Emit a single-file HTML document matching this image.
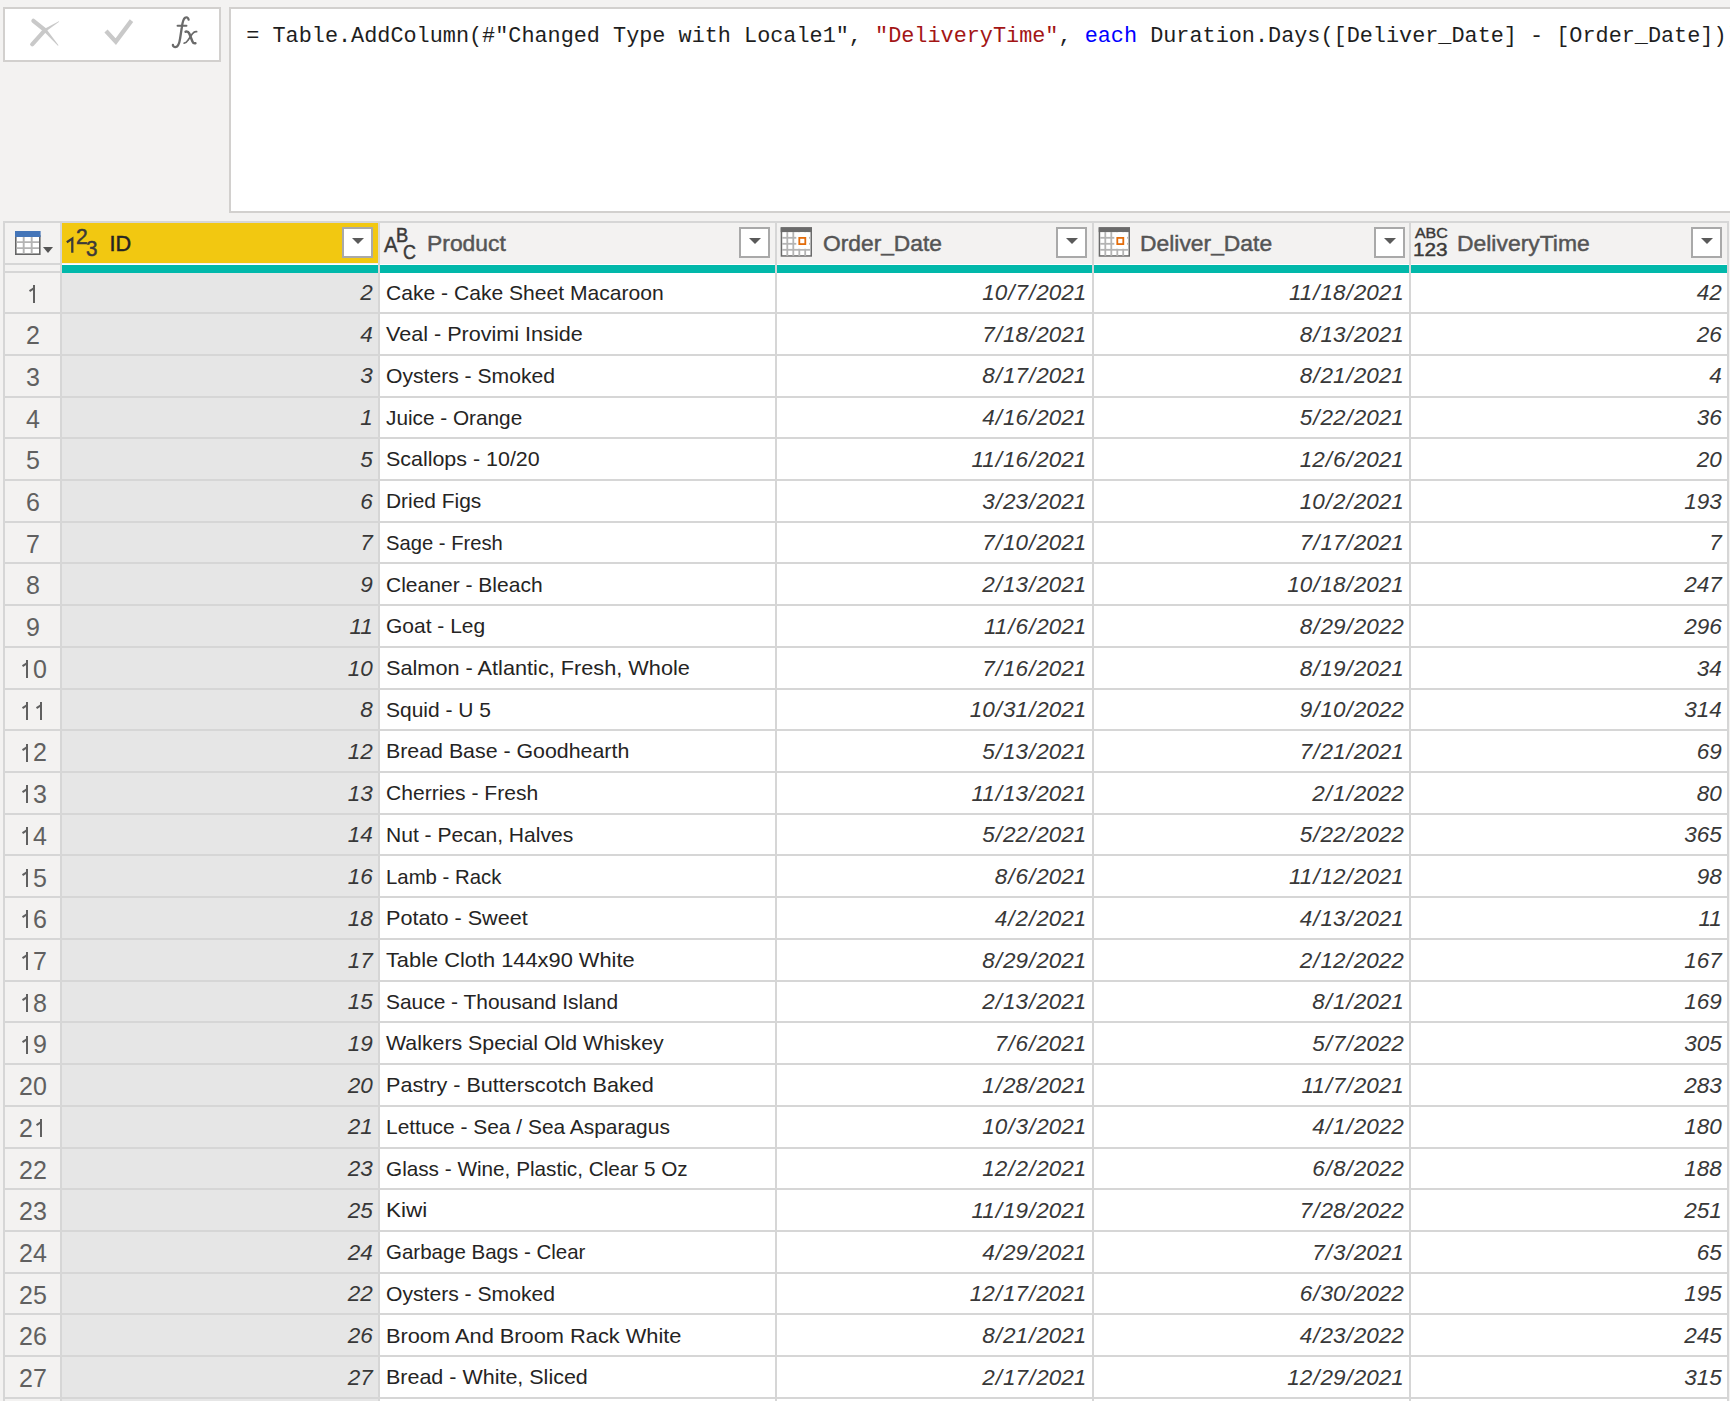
<!DOCTYPE html><html><head><meta charset="utf-8"><style>
*{margin:0;padding:0;box-sizing:border-box}
html,body{width:1730px;height:1402px;overflow:hidden;background:#f3f2f1;font-family:"Liberation Sans",sans-serif;color:#252423}
.a{position:absolute}
.t{position:absolute;white-space:pre;line-height:1}
.fb{position:absolute;background:#fff;border:2px solid #d2d0ce}
.mono{font-family:"Liberation Mono",monospace;font-size:21.83px;color:#1e1e1e}
.hl{position:absolute;height:2px;background:#d6d6d6}
.vl{position:absolute;width:2px;background:#d6d6d6}
.dd{position:absolute;width:31px;height:31px;background:#fff;border:2px solid #a9a9a9}
.dd:after{content:"";position:absolute;left:7.5px;top:9px;border-left:6px solid transparent;border-right:6px solid transparent;border-top:6px solid #5a5a5a}
.hd{position:absolute;font-size:21.7px;font-weight:normal;-webkit-text-stroke:0.45px currentColor;color:#555;line-height:1;white-space:pre;transform-origin:0 0}
.num{font-style:italic;font-size:22.5px;text-align:right;color:#383838}
.num i{font-style:italic;padding:0 1px}
.rn{font-size:25px;color:#606060;text-align:center}
.one{display:inline-block;position:relative;width:0.556em;height:1em;vertical-align:top;color:transparent}
.one::before{content:"";position:absolute;left:0.27em;top:0.13em;width:0.08em;height:0.716em;background:#606060}
.one::after{content:"";position:absolute;left:0.09em;top:0.22em;width:0.24em;height:0.08em;background:#606060;transform:rotate(-33deg);transform-origin:100% 0}
</style></head><body>
<div class="fb" style="left:3px;top:7px;width:218px;height:55px"></div>
<svg class="a" style="left:0;top:0" width="230" height="60"><g stroke="#c9c9c9" stroke-width="4.2" stroke-linecap="round"><line x1="33.4" y1="20.8" x2="45" y2="30.2"/><line x1="32.2" y1="44.3" x2="45" y2="30.2"/></g><g fill="#c9c9c9"><polygon points="43.68,31.34 57.9,45.76 58.5,45.24 46.32,29.06"/><polygon points="44.2,28.93 58.84,21.15 59.16,21.65 45.8,31.47"/></g><polyline points="106,31 115.8,41.6 131.5,20.6" fill="none" stroke="#c9c9c9" stroke-width="4.3"/></svg>
<svg class="a" style="left:0;top:0" width="220" height="60"><g fill="none" stroke="#6a6a6a" stroke-linecap="round"><path d="M188.6 19.6C188.3 17.4 186.4 16.9 185.1 17.7C183.3 18.9 182.3 23.5 181.8 27.5L180.1 38.5C179.3 44 177.4 47.3 175 47.1C173.6 47 172.8 46 172.9 44.8" stroke-width="2.3"/><path d="M177.6 25.8H186.4" stroke-width="2.1"/><path d="M185.6 31.7C187.6 31.3 188.6 32.1 189.3 33.6L192.5 41.6C193 42.9 194 43.5 195.4 43.3" stroke-width="2.5"/><path d="M196.6 31.7C195.2 31.4 193.8 32.1 192.4 33.7L187.8 40.4C186.9 41.9 185.7 43.2 184.2 43.2" stroke-width="1.7"/></g></svg>
<div class="fb" style="left:229px;top:7px;width:1520px;height:206px"></div>
<div class="t mono" style="left:246.3px;top:26px">= Table.AddColumn(#"Changed Type with Locale1", <span style="color:#a31515">"DeliveryTime"</span>, <span style="color:#0000ff">each</span> Duration.Days([Deliver_Date] - [Order_Date]))</div>
<div class="a" style="left:3px;top:221px;width:1725px;height:1190px;background:#fff"></div>
<div class="a" style="left:3px;top:221px;width:1725px;height:43px;background:#f3f2f1"></div>
<div class="a" style="left:3px;top:221px;width:59px;height:1190px;background:#f3f2f1"></div>
<div class="a" style="left:61.2px;top:273px;width:317.7px;height:1190px;background:#e6e6e6"></div>
<div class="a" style="left:62px;top:223px;width:316.9px;height:40px;background:#f2c811"></div>
<div class="a" style="left:62px;top:264.5px;width:1665.8px;height:8.5px;background:#01b8aa"></div>
<div class="hl" style="left:3px;top:221px;width:1725.4px"></div>
<div class="hl" style="left:3px;top:262.5px;width:59px"></div>
<div class="hl" style="left:3px;top:270.7px;width:59px"></div>
<div class="hl" style="left:3px;top:312.10px;width:1725.4px"></div>
<div class="hl" style="left:3px;top:353.82px;width:1725.4px"></div>
<div class="hl" style="left:3px;top:395.54px;width:1725.4px"></div>
<div class="hl" style="left:3px;top:437.26px;width:1725.4px"></div>
<div class="hl" style="left:3px;top:478.98px;width:1725.4px"></div>
<div class="hl" style="left:3px;top:520.70px;width:1725.4px"></div>
<div class="hl" style="left:3px;top:562.42px;width:1725.4px"></div>
<div class="hl" style="left:3px;top:604.14px;width:1725.4px"></div>
<div class="hl" style="left:3px;top:645.86px;width:1725.4px"></div>
<div class="hl" style="left:3px;top:687.58px;width:1725.4px"></div>
<div class="hl" style="left:3px;top:729.30px;width:1725.4px"></div>
<div class="hl" style="left:3px;top:771.02px;width:1725.4px"></div>
<div class="hl" style="left:3px;top:812.74px;width:1725.4px"></div>
<div class="hl" style="left:3px;top:854.46px;width:1725.4px"></div>
<div class="hl" style="left:3px;top:896.18px;width:1725.4px"></div>
<div class="hl" style="left:3px;top:937.90px;width:1725.4px"></div>
<div class="hl" style="left:3px;top:979.62px;width:1725.4px"></div>
<div class="hl" style="left:3px;top:1021.34px;width:1725.4px"></div>
<div class="hl" style="left:3px;top:1063.06px;width:1725.4px"></div>
<div class="hl" style="left:3px;top:1104.78px;width:1725.4px"></div>
<div class="hl" style="left:3px;top:1146.50px;width:1725.4px"></div>
<div class="hl" style="left:3px;top:1188.22px;width:1725.4px"></div>
<div class="hl" style="left:3px;top:1229.94px;width:1725.4px"></div>
<div class="hl" style="left:3px;top:1271.66px;width:1725.4px"></div>
<div class="hl" style="left:3px;top:1313.38px;width:1725.4px"></div>
<div class="hl" style="left:3px;top:1355.10px;width:1725.4px"></div>
<div class="hl" style="left:3px;top:1396.82px;width:1725.4px"></div>
<div class="vl" style="left:2.8px;top:221px;height:1190px"></div>
<div class="vl" style="left:60.20px;top:221px;height:1190px"></div>
<div class="vl" style="left:377.90px;top:221px;height:1190px"></div>
<div class="vl" style="left:774.50px;top:221px;height:1190px"></div>
<div class="vl" style="left:1091.90px;top:221px;height:1190px"></div>
<div class="vl" style="left:1409.40px;top:221px;height:1190px"></div>
<div class="vl" style="left:1726.80px;top:221px;height:1190px"></div>
<svg class="a" style="left:14px;top:230px" width="42" height="28"><rect x="1.8" y="6" width="24" height="18.2" fill="#fff" stroke="#666" stroke-width="1.6"/><path d="M9.7 7v16.4M17.7 7v16.4M2.6 12.1h22.4M2.6 18.1h22.4" stroke="#b4b4b4" stroke-width="1.9"/><rect x="1" y="1" width="25.6" height="6" fill="#4475b8"/><path d="M29 17h10l-5 6z" fill="#555"/></svg>
<svg class="a" style="left:0;top:0" width="100" height="260"><path d="M66.8 242.2L72.3 238.6V252.8" fill="none" stroke="#3b3a39" stroke-width="2.3"/></svg>
<div class="t" style="left:75.55px;top:226.00px;font-size:22.00px;font-weight:normal;color:#3b3a39;-webkit-text-stroke:0.5px #3b3a39;transform:scaleX(0.958);transform-origin:0 0">2</div>
<div class="t" style="left:86.27px;top:238.15px;font-size:21.69px;font-weight:normal;color:#3b3a39;-webkit-text-stroke:0.5px #3b3a39;transform:scaleX(0.952);transform-origin:0 0">3</div>
<div class="hd" style="left:109.5px;top:232.8px;color:#252423">ID</div>
<div class="dd" style="left:342.3px;top:227.3px"></div>
<div class="t" style="left:384.00px;top:233.83px;font-size:22.32px;font-weight:normal;color:#3b3a39;-webkit-text-stroke:0.5px #3b3a39;transform:scaleX(0.910);transform-origin:0 0">A</div>
<div class="t" style="left:396.34px;top:224.71px;font-size:20.58px;font-weight:normal;color:#3b3a39;-webkit-text-stroke:0.5px #3b3a39;transform:scaleX(0.889);transform-origin:0 0">B</div>
<div class="t" style="left:403.40px;top:240.63px;font-size:21.13px;font-weight:normal;color:#3b3a39;-webkit-text-stroke:0.5px #3b3a39;transform:scaleX(0.849);transform-origin:0 0">C</div>
<div class="hd" style="left:426.7px;top:232.8px;transform:scaleX(1.055)">Product</div>
<div class="dd" style="left:739.3px;top:227.3px"></div>
<svg class="a" style="left:780px;top:227px" width="34" height="31"><rect x="1.45" y="1.05" width="29.8" height="27.9" fill="#fff" stroke="#6b6b6b" stroke-width="1.5"/><rect x="0.7" y="0.3" width="31.3" height="4.8" fill="#6b6b6b"/><line x1="7.3" y1="5" x2="7.3" y2="28.9" stroke="#b4b4b4" stroke-width="1.8"/><line x1="13.3" y1="5" x2="13.3" y2="28.9" stroke="#b4b4b4" stroke-width="1.8"/><line x1="19.3" y1="5" x2="19.3" y2="28.9" stroke="#b4b4b4" stroke-width="1.8"/><line x1="25.2" y1="5" x2="25.2" y2="28.9" stroke="#b4b4b4" stroke-width="1.8"/><line x1="2.2" y1="10.8" x2="30.5" y2="10.8" stroke="#b4b4b4" stroke-width="1.8"/><line x1="2.2" y1="16.8" x2="30.5" y2="16.8" stroke="#b4b4b4" stroke-width="1.8"/><line x1="2.2" y1="22.8" x2="30.5" y2="22.8" stroke="#b4b4b4" stroke-width="1.8"/><rect x="16.3" y="5.2" width="12.8" height="16.6" rx="3" fill="#fff"/><rect x="19.3" y="10.9" width="6" height="6.2" fill="#fff" stroke="#e36c0a" stroke-width="1.8"/></svg>
<div class="hd" style="left:823px;top:232.8px;transform:scaleX(1.05)">Order_Date</div>
<div class="dd" style="left:1056.3px;top:227.3px"></div>
<svg class="a" style="left:1097.5px;top:227px" width="34" height="31"><rect x="1.45" y="1.05" width="29.8" height="27.9" fill="#fff" stroke="#6b6b6b" stroke-width="1.5"/><rect x="0.7" y="0.3" width="31.3" height="4.8" fill="#6b6b6b"/><line x1="7.3" y1="5" x2="7.3" y2="28.9" stroke="#b4b4b4" stroke-width="1.8"/><line x1="13.3" y1="5" x2="13.3" y2="28.9" stroke="#b4b4b4" stroke-width="1.8"/><line x1="19.3" y1="5" x2="19.3" y2="28.9" stroke="#b4b4b4" stroke-width="1.8"/><line x1="25.2" y1="5" x2="25.2" y2="28.9" stroke="#b4b4b4" stroke-width="1.8"/><line x1="2.2" y1="10.8" x2="30.5" y2="10.8" stroke="#b4b4b4" stroke-width="1.8"/><line x1="2.2" y1="16.8" x2="30.5" y2="16.8" stroke="#b4b4b4" stroke-width="1.8"/><line x1="2.2" y1="22.8" x2="30.5" y2="22.8" stroke="#b4b4b4" stroke-width="1.8"/><rect x="16.3" y="5.2" width="12.8" height="16.6" rx="3" fill="#fff"/><rect x="19.3" y="10.9" width="6" height="6.2" fill="#fff" stroke="#e36c0a" stroke-width="1.8"/></svg>
<div class="hd" style="left:1140px;top:232.8px;transform:scaleX(1.054)">Deliver_Date</div>
<div class="dd" style="left:1374.3px;top:227.3px"></div>
<div class="t" style="left:1415.00px;top:225.18px;font-size:15.49px;font-weight:normal;color:#3b3a39;-webkit-text-stroke:0.45px #3b3a39;transform:scaleX(1.028);transform-origin:0 0">ABC</div>
<div class="t" style="left:1413.34px;top:240.35px;font-size:19.01px;font-weight:normal;color:#3b3a39;-webkit-text-stroke:0.45px #3b3a39;transform:scaleX(1.093);transform-origin:0 0">123</div>
<div class="hd" style="left:1457.3px;top:232.8px;transform:scaleX(1.056)">DeliveryTime</div>
<div class="dd" style="left:1691.3px;top:227.3px"></div>
<div class="t rn" style="left:5px;width:56px;top:281.44px"><b class="one">1</b></div>
<div class="t num" style="left:61.2px;width:311.7px;top:282.05px">2</div>
<div class="t" style="left:386px;top:281.52px;font-size:21px;transform:scaleX(1.004);transform-origin:1px 0">Cake - Cake Sheet Macaroon</div>
<div class="t num" style="left:775.5px;width:310.9000000000001px;top:282.05px">10<i>/</i>7<i>/</i>2021</div>
<div class="t num" style="left:1092.9px;width:311.0px;top:282.05px">11<i>/</i>18<i>/</i>2021</div>
<div class="t num" style="left:1410.4px;width:311.39999999999986px;top:282.05px">42</div>
<div class="t rn" style="left:5px;width:56px;top:323.16px">2</div>
<div class="t num" style="left:61.2px;width:311.7px;top:323.77px">4</div>
<div class="t" style="left:386px;top:323.24px;font-size:21px;transform:scaleX(1.0277);transform-origin:1px 0">Veal - Provimi Inside</div>
<div class="t num" style="left:775.5px;width:310.9000000000001px;top:323.77px">7<i>/</i>18<i>/</i>2021</div>
<div class="t num" style="left:1092.9px;width:311.0px;top:323.77px">8<i>/</i>13<i>/</i>2021</div>
<div class="t num" style="left:1410.4px;width:311.39999999999986px;top:323.77px">26</div>
<div class="t rn" style="left:5px;width:56px;top:364.88px">3</div>
<div class="t num" style="left:61.2px;width:311.7px;top:365.49px">3</div>
<div class="t" style="left:386px;top:364.96px;font-size:21px;transform:scaleX(1.0054);transform-origin:1px 0">Oysters - Smoked</div>
<div class="t num" style="left:775.5px;width:310.9000000000001px;top:365.49px">8<i>/</i>17<i>/</i>2021</div>
<div class="t num" style="left:1092.9px;width:311.0px;top:365.49px">8<i>/</i>21<i>/</i>2021</div>
<div class="t num" style="left:1410.4px;width:311.39999999999986px;top:365.49px">4</div>
<div class="t rn" style="left:5px;width:56px;top:406.60px">4</div>
<div class="t num" style="left:61.2px;width:311.7px;top:407.21px">1</div>
<div class="t" style="left:386px;top:406.68px;font-size:21px;transform:scaleX(0.989);transform-origin:1px 0">Juice - Orange</div>
<div class="t num" style="left:775.5px;width:310.9000000000001px;top:407.21px">4<i>/</i>16<i>/</i>2021</div>
<div class="t num" style="left:1092.9px;width:311.0px;top:407.21px">5<i>/</i>22<i>/</i>2021</div>
<div class="t num" style="left:1410.4px;width:311.39999999999986px;top:407.21px">36</div>
<div class="t rn" style="left:5px;width:56px;top:448.32px">5</div>
<div class="t num" style="left:61.2px;width:311.7px;top:448.93px">5</div>
<div class="t" style="left:386px;top:448.40px;font-size:21px;transform:scaleX(1.0208);transform-origin:1px 0">Scallops - 10/20</div>
<div class="t num" style="left:775.5px;width:310.9000000000001px;top:448.93px">11<i>/</i>16<i>/</i>2021</div>
<div class="t num" style="left:1092.9px;width:311.0px;top:448.93px">12<i>/</i>6<i>/</i>2021</div>
<div class="t num" style="left:1410.4px;width:311.39999999999986px;top:448.93px">20</div>
<div class="t rn" style="left:5px;width:56px;top:490.04px">6</div>
<div class="t num" style="left:61.2px;width:311.7px;top:490.65px">6</div>
<div class="t" style="left:386px;top:490.12px;font-size:21px;transform:scaleX(0.9957);transform-origin:1px 0">Dried Figs</div>
<div class="t num" style="left:775.5px;width:310.9000000000001px;top:490.65px">3<i>/</i>23<i>/</i>2021</div>
<div class="t num" style="left:1092.9px;width:311.0px;top:490.65px">10<i>/</i>2<i>/</i>2021</div>
<div class="t num" style="left:1410.4px;width:311.39999999999986px;top:490.65px">193</div>
<div class="t rn" style="left:5px;width:56px;top:531.76px">7</div>
<div class="t num" style="left:61.2px;width:311.7px;top:532.37px">7</div>
<div class="t" style="left:386px;top:531.84px;font-size:21px;transform:scaleX(0.9613);transform-origin:1px 0">Sage - Fresh</div>
<div class="t num" style="left:775.5px;width:310.9000000000001px;top:532.37px">7<i>/</i>10<i>/</i>2021</div>
<div class="t num" style="left:1092.9px;width:311.0px;top:532.37px">7<i>/</i>17<i>/</i>2021</div>
<div class="t num" style="left:1410.4px;width:311.39999999999986px;top:532.37px">7</div>
<div class="t rn" style="left:5px;width:56px;top:573.48px">8</div>
<div class="t num" style="left:61.2px;width:311.7px;top:574.09px">9</div>
<div class="t" style="left:386px;top:573.56px;font-size:21px;transform:scaleX(1.0013);transform-origin:1px 0">Cleaner - Bleach</div>
<div class="t num" style="left:775.5px;width:310.9000000000001px;top:574.09px">2<i>/</i>13<i>/</i>2021</div>
<div class="t num" style="left:1092.9px;width:311.0px;top:574.09px">10<i>/</i>18<i>/</i>2021</div>
<div class="t num" style="left:1410.4px;width:311.39999999999986px;top:574.09px">247</div>
<div class="t rn" style="left:5px;width:56px;top:615.20px">9</div>
<div class="t num" style="left:61.2px;width:311.7px;top:615.81px">11</div>
<div class="t" style="left:386px;top:615.28px;font-size:21px;transform:scaleX(1.0);transform-origin:1px 0">Goat - Leg</div>
<div class="t num" style="left:775.5px;width:310.9000000000001px;top:615.81px">11<i>/</i>6<i>/</i>2021</div>
<div class="t num" style="left:1092.9px;width:311.0px;top:615.81px">8<i>/</i>29<i>/</i>2022</div>
<div class="t num" style="left:1410.4px;width:311.39999999999986px;top:615.81px">296</div>
<div class="t rn" style="left:5px;width:56px;top:656.92px"><b class="one">1</b>0</div>
<div class="t num" style="left:61.2px;width:311.7px;top:657.53px">10</div>
<div class="t" style="left:386px;top:657.00px;font-size:21px;transform:scaleX(1.0332);transform-origin:1px 0">Salmon - Atlantic, Fresh, Whole</div>
<div class="t num" style="left:775.5px;width:310.9000000000001px;top:657.53px">7<i>/</i>16<i>/</i>2021</div>
<div class="t num" style="left:1092.9px;width:311.0px;top:657.53px">8<i>/</i>19<i>/</i>2021</div>
<div class="t num" style="left:1410.4px;width:311.39999999999986px;top:657.53px">34</div>
<div class="t rn" style="left:5px;width:56px;top:698.64px"><b class="one">1</b><b class="one">1</b></div>
<div class="t num" style="left:61.2px;width:311.7px;top:699.25px">8</div>
<div class="t" style="left:386px;top:698.72px;font-size:21px;transform:scaleX(0.9981);transform-origin:1px 0">Squid - U 5</div>
<div class="t num" style="left:775.5px;width:310.9000000000001px;top:699.25px">10<i>/</i>31<i>/</i>2021</div>
<div class="t num" style="left:1092.9px;width:311.0px;top:699.25px">9<i>/</i>10<i>/</i>2022</div>
<div class="t num" style="left:1410.4px;width:311.39999999999986px;top:699.25px">314</div>
<div class="t rn" style="left:5px;width:56px;top:740.36px"><b class="one">1</b>2</div>
<div class="t num" style="left:61.2px;width:311.7px;top:740.97px">12</div>
<div class="t" style="left:386px;top:740.44px;font-size:21px;transform:scaleX(1.0165);transform-origin:1px 0">Bread Base - Goodhearth</div>
<div class="t num" style="left:775.5px;width:310.9000000000001px;top:740.97px">5<i>/</i>13<i>/</i>2021</div>
<div class="t num" style="left:1092.9px;width:311.0px;top:740.97px">7<i>/</i>21<i>/</i>2021</div>
<div class="t num" style="left:1410.4px;width:311.39999999999986px;top:740.97px">69</div>
<div class="t rn" style="left:5px;width:56px;top:782.08px"><b class="one">1</b>3</div>
<div class="t num" style="left:61.2px;width:311.7px;top:782.69px">13</div>
<div class="t" style="left:386px;top:782.16px;font-size:21px;transform:scaleX(1.0034);transform-origin:1px 0">Cherries - Fresh</div>
<div class="t num" style="left:775.5px;width:310.9000000000001px;top:782.69px">11<i>/</i>13<i>/</i>2021</div>
<div class="t num" style="left:1092.9px;width:311.0px;top:782.69px">2<i>/</i>1<i>/</i>2022</div>
<div class="t num" style="left:1410.4px;width:311.39999999999986px;top:782.69px">80</div>
<div class="t rn" style="left:5px;width:56px;top:823.80px"><b class="one">1</b>4</div>
<div class="t num" style="left:61.2px;width:311.7px;top:824.41px">14</div>
<div class="t" style="left:386px;top:823.88px;font-size:21px;transform:scaleX(1.0022);transform-origin:1px 0">Nut - Pecan, Halves</div>
<div class="t num" style="left:775.5px;width:310.9000000000001px;top:824.41px">5<i>/</i>22<i>/</i>2021</div>
<div class="t num" style="left:1092.9px;width:311.0px;top:824.41px">5<i>/</i>22<i>/</i>2022</div>
<div class="t num" style="left:1410.4px;width:311.39999999999986px;top:824.41px">365</div>
<div class="t rn" style="left:5px;width:56px;top:865.52px"><b class="one">1</b>5</div>
<div class="t num" style="left:61.2px;width:311.7px;top:866.13px">16</div>
<div class="t" style="left:386px;top:865.60px;font-size:21px;transform:scaleX(0.9692);transform-origin:1px 0">Lamb - Rack</div>
<div class="t num" style="left:775.5px;width:310.9000000000001px;top:866.13px">8<i>/</i>6<i>/</i>2021</div>
<div class="t num" style="left:1092.9px;width:311.0px;top:866.13px">11<i>/</i>12<i>/</i>2021</div>
<div class="t num" style="left:1410.4px;width:311.39999999999986px;top:866.13px">98</div>
<div class="t rn" style="left:5px;width:56px;top:907.24px"><b class="one">1</b>6</div>
<div class="t num" style="left:61.2px;width:311.7px;top:907.85px">18</div>
<div class="t" style="left:386px;top:907.32px;font-size:21px;transform:scaleX(1.0294);transform-origin:1px 0">Potato - Sweet</div>
<div class="t num" style="left:775.5px;width:310.9000000000001px;top:907.85px">4<i>/</i>2<i>/</i>2021</div>
<div class="t num" style="left:1092.9px;width:311.0px;top:907.85px">4<i>/</i>13<i>/</i>2021</div>
<div class="t num" style="left:1410.4px;width:311.39999999999986px;top:907.85px">11</div>
<div class="t rn" style="left:5px;width:56px;top:948.96px"><b class="one">1</b>7</div>
<div class="t num" style="left:61.2px;width:311.7px;top:949.57px">17</div>
<div class="t" style="left:386px;top:949.04px;font-size:21px;transform:scaleX(1.0391);transform-origin:1px 0">Table Cloth 144x90 White</div>
<div class="t num" style="left:775.5px;width:310.9000000000001px;top:949.57px">8<i>/</i>29<i>/</i>2021</div>
<div class="t num" style="left:1092.9px;width:311.0px;top:949.57px">2<i>/</i>12<i>/</i>2022</div>
<div class="t num" style="left:1410.4px;width:311.39999999999986px;top:949.57px">167</div>
<div class="t rn" style="left:5px;width:56px;top:990.68px"><b class="one">1</b>8</div>
<div class="t num" style="left:61.2px;width:311.7px;top:991.29px">15</div>
<div class="t" style="left:386px;top:990.76px;font-size:21px;transform:scaleX(0.9957);transform-origin:1px 0">Sauce - Thousand Island</div>
<div class="t num" style="left:775.5px;width:310.9000000000001px;top:991.29px">2<i>/</i>13<i>/</i>2021</div>
<div class="t num" style="left:1092.9px;width:311.0px;top:991.29px">8<i>/</i>1<i>/</i>2021</div>
<div class="t num" style="left:1410.4px;width:311.39999999999986px;top:991.29px">169</div>
<div class="t rn" style="left:5px;width:56px;top:1032.40px"><b class="one">1</b>9</div>
<div class="t num" style="left:61.2px;width:311.7px;top:1033.01px">19</div>
<div class="t" style="left:386px;top:1032.48px;font-size:21px;transform:scaleX(1.0154);transform-origin:1px 0">Walkers Special Old Whiskey</div>
<div class="t num" style="left:775.5px;width:310.9000000000001px;top:1033.01px">7<i>/</i>6<i>/</i>2021</div>
<div class="t num" style="left:1092.9px;width:311.0px;top:1033.01px">5<i>/</i>7<i>/</i>2022</div>
<div class="t num" style="left:1410.4px;width:311.39999999999986px;top:1033.01px">305</div>
<div class="t rn" style="left:5px;width:56px;top:1074.12px">20</div>
<div class="t num" style="left:61.2px;width:311.7px;top:1074.73px">20</div>
<div class="t" style="left:386px;top:1074.20px;font-size:21px;transform:scaleX(1.0288);transform-origin:1px 0">Pastry - Butterscotch Baked</div>
<div class="t num" style="left:775.5px;width:310.9000000000001px;top:1074.73px">1<i>/</i>28<i>/</i>2021</div>
<div class="t num" style="left:1092.9px;width:311.0px;top:1074.73px">11<i>/</i>7<i>/</i>2021</div>
<div class="t num" style="left:1410.4px;width:311.39999999999986px;top:1074.73px">283</div>
<div class="t rn" style="left:5px;width:56px;top:1115.84px">2<b class="one">1</b></div>
<div class="t num" style="left:61.2px;width:311.7px;top:1116.45px">21</div>
<div class="t" style="left:386px;top:1115.92px;font-size:21px;transform:scaleX(0.9965);transform-origin:1px 0">Lettuce - Sea / Sea Asparagus</div>
<div class="t num" style="left:775.5px;width:310.9000000000001px;top:1116.45px">10<i>/</i>3<i>/</i>2021</div>
<div class="t num" style="left:1092.9px;width:311.0px;top:1116.45px">4<i>/</i>1<i>/</i>2022</div>
<div class="t num" style="left:1410.4px;width:311.39999999999986px;top:1116.45px">180</div>
<div class="t rn" style="left:5px;width:56px;top:1157.56px">22</div>
<div class="t num" style="left:61.2px;width:311.7px;top:1158.17px">23</div>
<div class="t" style="left:386px;top:1157.64px;font-size:21px;transform:scaleX(0.9868);transform-origin:1px 0">Glass - Wine, Plastic, Clear 5 Oz</div>
<div class="t num" style="left:775.5px;width:310.9000000000001px;top:1158.17px">12<i>/</i>2<i>/</i>2021</div>
<div class="t num" style="left:1092.9px;width:311.0px;top:1158.17px">6<i>/</i>8<i>/</i>2022</div>
<div class="t num" style="left:1410.4px;width:311.39999999999986px;top:1158.17px">188</div>
<div class="t rn" style="left:5px;width:56px;top:1199.28px">23</div>
<div class="t num" style="left:61.2px;width:311.7px;top:1199.89px">25</div>
<div class="t" style="left:386px;top:1199.36px;font-size:21px;transform:scaleX(1.0714);transform-origin:1px 0">Kiwi</div>
<div class="t num" style="left:775.5px;width:310.9000000000001px;top:1199.89px">11<i>/</i>19<i>/</i>2021</div>
<div class="t num" style="left:1092.9px;width:311.0px;top:1199.89px">7<i>/</i>28<i>/</i>2022</div>
<div class="t num" style="left:1410.4px;width:311.39999999999986px;top:1199.89px">251</div>
<div class="t rn" style="left:5px;width:56px;top:1241.00px">24</div>
<div class="t num" style="left:61.2px;width:311.7px;top:1241.61px">24</div>
<div class="t" style="left:386px;top:1241.08px;font-size:21px;transform:scaleX(0.9759);transform-origin:1px 0">Garbage Bags - Clear</div>
<div class="t num" style="left:775.5px;width:310.9000000000001px;top:1241.61px">4<i>/</i>29<i>/</i>2021</div>
<div class="t num" style="left:1092.9px;width:311.0px;top:1241.61px">7<i>/</i>3<i>/</i>2021</div>
<div class="t num" style="left:1410.4px;width:311.39999999999986px;top:1241.61px">65</div>
<div class="t rn" style="left:5px;width:56px;top:1282.72px">25</div>
<div class="t num" style="left:61.2px;width:311.7px;top:1283.33px">22</div>
<div class="t" style="left:386px;top:1282.80px;font-size:21px;transform:scaleX(1.0054);transform-origin:1px 0">Oysters - Smoked</div>
<div class="t num" style="left:775.5px;width:310.9000000000001px;top:1283.33px">12<i>/</i>17<i>/</i>2021</div>
<div class="t num" style="left:1092.9px;width:311.0px;top:1283.33px">6<i>/</i>30<i>/</i>2022</div>
<div class="t num" style="left:1410.4px;width:311.39999999999986px;top:1283.33px">195</div>
<div class="t rn" style="left:5px;width:56px;top:1324.44px">26</div>
<div class="t num" style="left:61.2px;width:311.7px;top:1325.05px">26</div>
<div class="t" style="left:386px;top:1324.52px;font-size:21px;transform:scaleX(1.0376);transform-origin:1px 0">Broom And Broom Rack White</div>
<div class="t num" style="left:775.5px;width:310.9000000000001px;top:1325.05px">8<i>/</i>21<i>/</i>2021</div>
<div class="t num" style="left:1092.9px;width:311.0px;top:1325.05px">4<i>/</i>23<i>/</i>2022</div>
<div class="t num" style="left:1410.4px;width:311.39999999999986px;top:1325.05px">245</div>
<div class="t rn" style="left:5px;width:56px;top:1366.16px">27</div>
<div class="t num" style="left:61.2px;width:311.7px;top:1366.77px">27</div>
<div class="t" style="left:386px;top:1366.24px;font-size:21px;transform:scaleX(1.0232);transform-origin:1px 0">Bread - White, Sliced</div>
<div class="t num" style="left:775.5px;width:310.9000000000001px;top:1366.77px">2<i>/</i>17<i>/</i>2021</div>
<div class="t num" style="left:1092.9px;width:311.0px;top:1366.77px">12<i>/</i>29<i>/</i>2021</div>
<div class="t num" style="left:1410.4px;width:311.39999999999986px;top:1366.77px">315</div>
<div class="a" style="left:0;top:1401px;width:1730px;height:1px;background:#fff"></div>
</body></html>
